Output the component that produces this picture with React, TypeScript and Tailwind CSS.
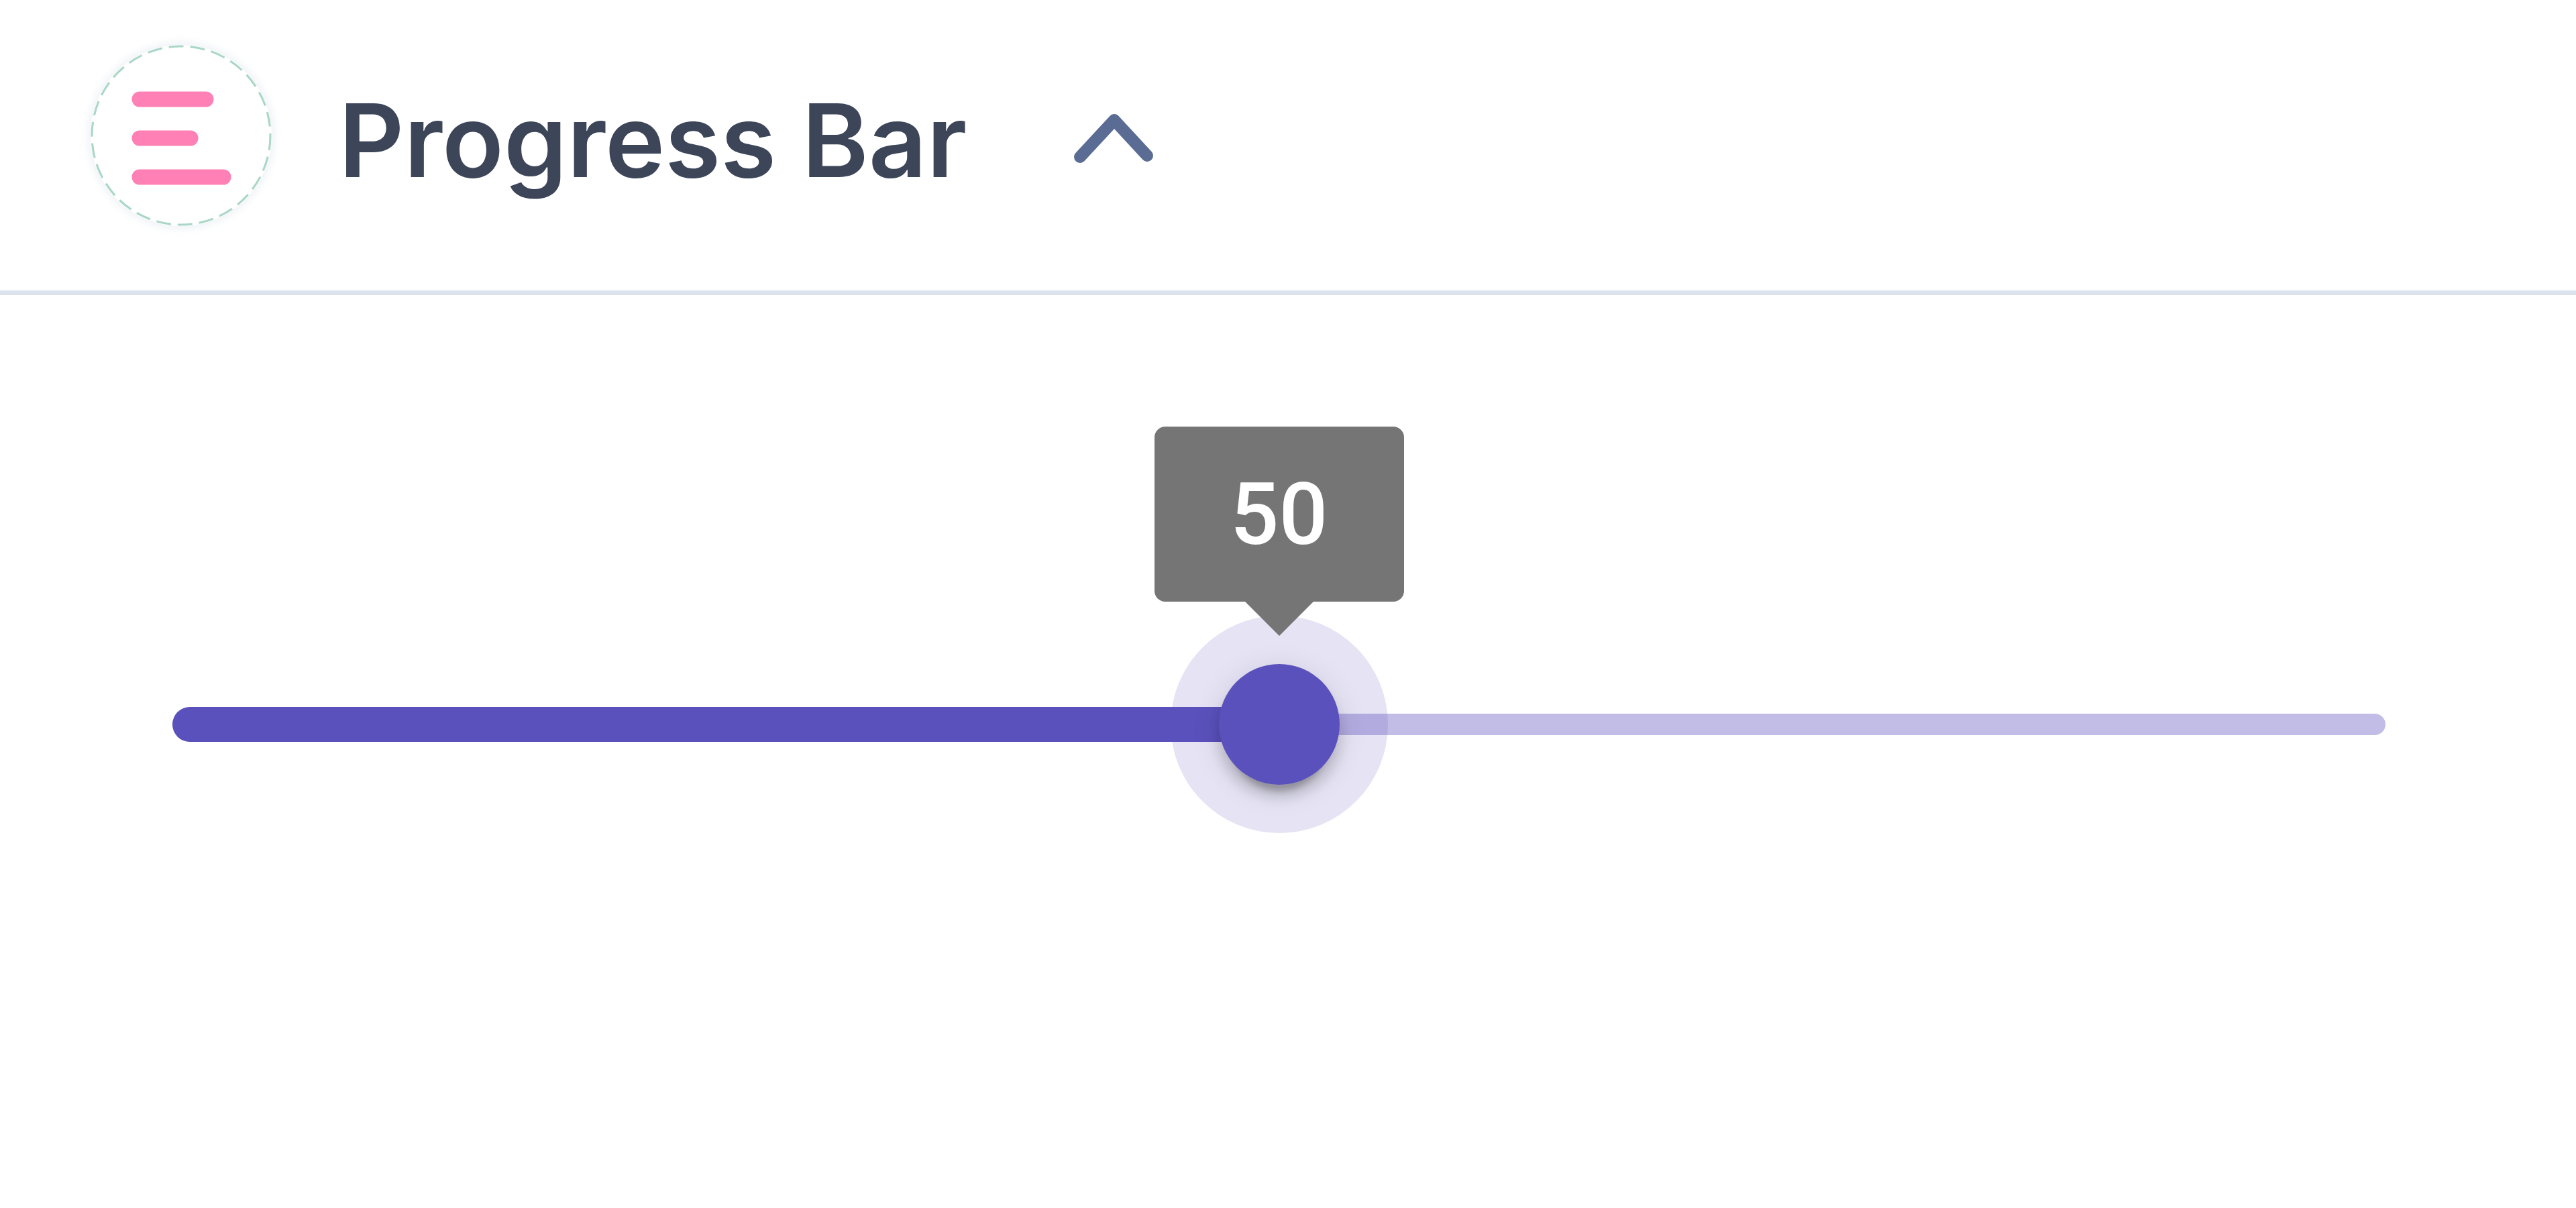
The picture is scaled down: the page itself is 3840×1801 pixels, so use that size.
import { useState } from 'react'

// Header badge: dashed ring with three pink bars
function SectionBadge() {
  return (
    <div className="w-[270px] h-[270px] rounded-full shrink-0 shadow-[0_0_10px_6px_rgba(226,232,240,0.45)] bg-white">
      <svg width="270" height="270" viewBox="0 0 270 270" fill="none">
        <circle cx="135" cy="135" r="133" stroke="#a9d6c6" strokeWidth="3" strokeDasharray="22 10" />
        <g stroke="#ff80b5" strokeWidth="23" strokeLinecap="round">
          <line x1="73" y1="81" x2="172" y2="81" />
          <line x1="73" y1="139" x2="149" y2="139" />
          <line x1="73" y1="197" x2="198" y2="197" />
        </g>
      </svg>
    </div>
  )
}

function ChevronUp() {
  return (
    <svg width="130" height="90" viewBox="0 0 130 90" fill="none" className="shrink-0">
      <path d="M13 75 L64 20 L113 73" stroke="#5a6c93" strokeWidth="18" strokeLinecap="round" strokeLinejoin="round" />
    </svg>
  )
}

function ValueSlider({ value }: { value: number }) {
  const pct = `${value}%`
  return (
    <div className="relative h-[52px]">
      {/* rail */}
      <div className="absolute left-0 right-0 top-1/2 -translate-y-1/2 h-[32px] rounded-full bg-[#c1bde6]" />
      {/* active track */}
      <div className="absolute left-0 top-1/2 -translate-y-1/2 h-[52px] rounded-full bg-[#5b51bd]" style={{ width: pct }} />
      {/* thumb */}
      <div
        className="absolute top-1/2 -translate-x-1/2 -translate-y-1/2 w-[180px] h-[180px] rounded-full bg-[#5b51bd] shadow-[0_0_0_72px_rgba(91,81,189,0.16)]"
        style={{ left: pct }}
      >
        <div className="absolute inset-0 rounded-full shadow-[0_27px_9px_-18px_rgba(0,0,0,0.2),0_18px_18px_0_rgba(0,0,0,0.14),0_9px_45px_0_rgba(0,0,0,0.12)]" />
        {/* value label */}
        <div className="absolute left-1/2 -translate-x-1/2 bottom-[273px] w-[372px] h-[261px] rounded-[16px] bg-[#757575] flex items-center justify-center">
          <span className="text-white text-[128px] font-medium leading-none" style={{ fontFamily: 'Roboto, "Liberation Sans", sans-serif' }}>
            {value}
          </span>
          <div className="absolute left-1/2 bottom-0 w-[72px] h-[72px] bg-[#757575] -translate-x-1/2 translate-y-1/2 rotate-45" />
        </div>
      </div>
    </div>
  )
}

export default function App() {
  const [open] = useState(true)

  return (
    <div className="min-h-screen bg-white" style={{ fontFamily: 'Inter, "Noto Sans", sans-serif' }}>
      <div className="flex items-center pl-[135px] pt-[67px] pb-[96px] border-b-[7px] border-[#dde3ed]">
        <SectionBadge />
        <h1 className="ml-[100px] pt-[14px] text-[151px] font-semibold leading-none text-[#3d4659]">Progress Bar</h1>
        <div className="ml-[156px] pt-[4px]">{open && <ChevronUp />}</div>
      </div>

      <div className="pl-[257px] pr-[284px] pt-[614px]">
        <ValueSlider value={50} />
      </div>
    </div>
  )
}
